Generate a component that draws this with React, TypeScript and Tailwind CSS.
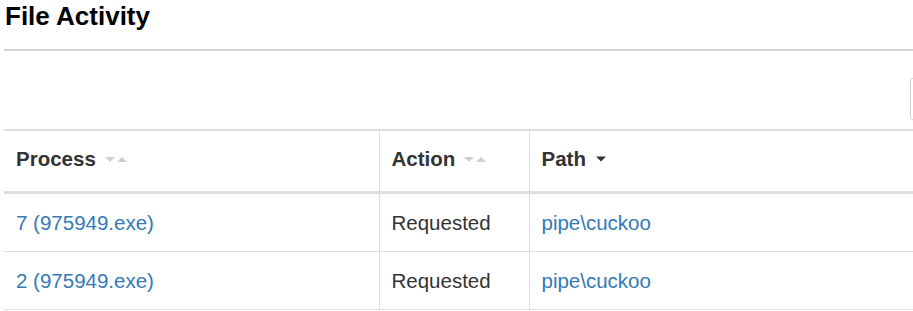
import React from 'react';

type Row = { process: string; action: string; path: string };

const ROWS: Row[] = [
  { process: '7 (975949.exe)', action: 'Requested', path: 'pipe\\cuckoo' },
  { process: '2 (975949.exe)', action: 'Requested', path: 'pipe\\cuckoo' },
];

const SortBoth = () => (
  <svg width="24" height="6" viewBox="0 0 24 6" className="ml-[8px] shrink-0">
    <path d="M1 1h10l-5 5z" fill="#cfcfcf" />
    <path d="M13 6h10l-5-5z" fill="#cfcfcf" />
  </svg>
);

const SortDown = () => (
  <svg width="10" height="6" viewBox="0 0 10 6" className="ml-[10px] shrink-0">
    <path d="M0 0.5h10l-5 5z" fill="#333333" />
  </svg>
);

const Header: React.FC<{ label: string; icon: React.ReactNode; className?: string }> = ({ label, icon, className }) => (
  <th className={`text-left align-top font-bold px-[12px] pt-[13px] pb-[18px] ${className ?? ''}`}>
    <span className="flex items-center">
      {label}
      {icon}
    </span>
  </th>
);

export default function App() {
  return (
    <div className="w-screen h-[311px] overflow-hidden bg-white font-['Liberation_Sans',Arial,sans-serif]">
      <div className="pl-[4px] w-[1110px]">
        <h2 className="pl-[1px] text-[26px] leading-[32px] font-bold text-black">File Activity</h2>
        <div className="mt-[17px] h-[2px] bg-[#d4d4d4]" />

        <div className="flex justify-end pt-[26px] pb-[8px]">
          <div className="w-[200px] h-[44px] rounded-[5px] border border-[#cccccc] bg-white" />
        </div>

        <table className="w-full border-collapse text-[20.5px] leading-[29px] text-[#333333]">
          <thead>
            <tr className="border-t-2 border-b-[3px] border-[#dddddd]">
              <Header label="Process" icon={<SortBoth />} className="w-[375px]" />
              <Header label="Action" icon={<SortBoth />} className="w-[150px] border-l border-[#dddddd]" />
              <Header label="Path" icon={<SortDown />} className="border-l border-[#dddddd]" />
            </tr>
          </thead>
          <tbody>
            {ROWS.map((row, i) => (
              <tr key={i} className="border-b border-[#dddddd]">
                <td className="px-[12px] py-[14px] text-[#337ab7]">{row.process}</td>
                <td className="px-[12px] py-[14px] border-l border-[#dddddd]">{row.action}</td>
                <td className="px-[12px] py-[14px] border-l border-[#dddddd] text-[#337ab7]">{row.path}</td>
              </tr>
            ))}
          </tbody>
        </table>
      </div>
    </div>
  );
}
